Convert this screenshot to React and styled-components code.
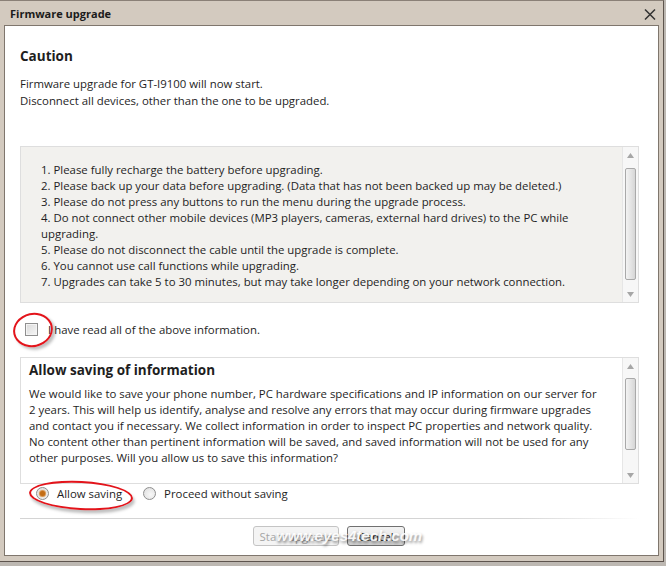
import React from "react";
import styled, { createGlobalStyle } from "styled-components";

const GlobalStyle = createGlobalStyle`
  html, body {
    margin: 0;
    padding: 0;
    background: #bdb8b2;
  }
  body {
    font-family: "Open Sans", "Noto Sans", sans-serif;
    font-size: 11.4px;
    color: #1e1e1e;
  }
`;

const Window = styled.div`
  position: relative;
  width: 664px;
  height: 562px;
  box-sizing: border-box;
  background: #d3cabf;
  border-top: 1px solid #8a8077;
  border-right: 1px solid #5e554e;
  border-bottom: 1px solid #5e554e;
  display: flex;
  flex-direction: column;
`;

const TitleBar = styled.div`
  height: 24px;
  display: flex;
  align-items: center;
  justify-content: space-between;
  padding: 0 7px 0 10px;
  font-weight: 700;
  font-size: 11px;
  color: #1b1b1b;
`;

const CloseIcon = styled.svg`
  width: 12px;
  height: 11px;
  margin-top: 2px;
`;

const Content = styled.div`
  position: relative;
  margin: 0 4px 5px 4px;
  height: 531px;
  box-sizing: border-box;
  background: #fff;
  border: 1px solid #7f766d;
  padding: 20px 0 0 15px;
  display: flex;
  flex-direction: column;
`;

const Heading = styled.div`
  font-weight: 700;
  font-size: 13.5px;
  line-height: 20px;
`;

const Intro = styled.div`
  margin-top: 9px;
  line-height: 17px;
`;

const Panel = styled.div`
  display: flex;
  width: 619px;
  height: ${(p) => p.$height}px;
  box-sizing: border-box;
  margin-top: ${(p) => p.$top}px;
  background: ${(p) => p.$bg};
  border: 1px solid #dedede;
`;

const PanelText = styled.div`
  flex: 1;
  padding: ${(p) => p.$pad};
  line-height: 16px;
  white-space: nowrap;
`;

const PanelTitle = styled.div`
  font-weight: 700;
  font-size: 13.5px;
  line-height: 18px;
  margin-bottom: 7px;
`;

const ScrollTrack = styled.div`
  width: 15px;
  display: flex;
  flex-direction: column;
  align-items: center;
  background: #f7f7f7;
  border-left: 1px solid #e6e6e6;
`;

const ArrowBox = styled.div`
  height: 16px;
  display: flex;
  align-items: center;
  justify-content: center;
`;

const Thumb = styled.div`
  width: 11px;
  height: ${(p) => p.$h}px;
  margin-top: ${(p) => p.$top}px;
  box-sizing: border-box;
  border: 1px solid #a9a9a9;
  border-radius: 2px;
  background: linear-gradient(to right, #f3f3f3, #e2e2e2 60%, #d6d6d6);
`;

const Spacer = styled.div`
  flex: 1;
`;

const CheckRow = styled.label`
  position: relative;
  display: flex;
  align-items: center;
  height: 13px;
  margin: 20px 0 0 5px;
  gap: 10px;
  line-height: 13px;
`;

const CheckBox = styled.span`
  width: 13px;
  height: 13px;
  box-sizing: border-box;
  border: 1px solid #8f8f8f;
  background: linear-gradient(135deg, #dadada, #f6f6f6);
  box-shadow: inset 0 0 0 1px #f4f4f4;
`;

const Ellipse = styled.span`
  position: absolute;
  left: ${(p) => p.$x}px;
  top: ${(p) => p.$y}px;
  width: ${(p) => p.$w}px;
  height: ${(p) => p.$h}px;
  box-sizing: border-box;
  border: 2px solid #e3141b;
  border-radius: 50%;
  transform: rotate(${(p) => p.$rot}deg);
  box-shadow: 2px 3px 3px rgba(0, 0, 0, 0.25);
  pointer-events: none;
`;

const RadioRow = styled.div`
  position: relative;
  display: flex;
  align-items: center;
  height: 13px;
  margin: 3px 0 0 16px;
`;

const RadioOption = styled.label`
  display: flex;
  align-items: center;
  gap: 8px;
  margin-right: 21px;
  line-height: 13px;
`;

const Radio = styled.span`
  width: 13px;
  height: 13px;
  box-sizing: border-box;
  border-radius: 50%;
  border: 1px solid #8e8e8e;
  background: radial-gradient(circle at 60% 60%, #f8f8f8, #dcdcdc);
  display: flex;
  align-items: center;
  justify-content: center;
  &::after {
    content: "";
    width: 5px;
    height: 5px;
    border-radius: 50%;
    background: ${(p) => (p.$checked ? "#c36d16" : "transparent")};
    box-shadow: ${(p) => (p.$checked ? "0 0 1px 1px #d58a3c" : "none")};
  }
`;

const Separator = styled.div`
  margin-top: 18px;
  width: 620px;
  height: 1px;
  background: linear-gradient(to right, #d4d4d4 0%, #d4d4d4 80%, rgba(212, 212, 212, 0));
`;

const ButtonRow = styled.div`
  position: relative;
  display: flex;
  justify-content: center;
  gap: 8px;
  margin: 7px 0 0 0;
  padding-right: 20px;
`;

const Button = styled.button`
  height: 20px;
  width: ${(p) => p.$w}px;
  padding: 0;
  box-sizing: border-box;
  font-family: inherit;
  font-size: 11.4px;
  border-radius: 3px;
  border: 1px solid ${(p) => (p.disabled ? "#c4c4c4" : "#707070")};
  color: ${(p) => (p.disabled ? "#a5a5a5" : "#1e1e1e")};
  background: ${(p) =>
    p.disabled
      ? "#f4f4f4"
      : "linear-gradient(to bottom, #f2f2f2 0%, #ebebeb 50%, #dddddd 51%, #cfcfcf 100%)"};
`;

const Watermark = styled.span`
  position: absolute;
  left: 256px;
  top: 1px;
  font-family: "Liberation Sans", Arial, sans-serif;
  font-size: 15px;
  font-weight: 700;
  font-style: italic;
  color: rgba(255, 255, 255, 0.92);
  text-shadow: 1px 2px 3px rgba(0, 0, 0, 0.45);
  pointer-events: none;
  white-space: nowrap;
`;

const cautionItems = [
  "1. Please fully recharge the battery before upgrading.",
  "2. Please back up your data before upgrading. (Data that has not been backed up may be deleted.)",
  "3. Please do not press any buttons to run the menu during the upgrade process.",
  "4. Do not connect other mobile devices (MP3 players, cameras, external hard drives) to the PC while",
  "upgrading.",
  "5. Please do not disconnect the cable until the upgrade is complete.",
  "6. You cannot use call functions while upgrading.",
  "7. Upgrades can take 5 to 30 minutes, but may take longer depending on your network connection.",
];

const privacyLines = [
  "We would like to save your phone number, PC hardware specifications and IP information on our server for",
  "2 years. This will help us identify, analyse and resolve any errors that may occur during firmware upgrades",
  "and contact you if necessary. We collect information in order to inspect PC properties and network quality.",
  "No content other than pertinent information will be saved, and saved information will not be used for any",
  "other purposes. Will you allow us to save this information?",
];

const Arrow = ({ up }) => (
  <ArrowBox>
    <svg width="7" height="5" viewBox="0 0 7 5">
      <path d={up ? "M0 5 L3.5 0 L7 5 Z" : "M0 0 L3.5 5 L7 0 Z"} fill="#a6a6a6" />
    </svg>
  </ArrowBox>
);

const Scrollbar = ({ thumbTop, thumbHeight }) => (
  <ScrollTrack>
    <Arrow up />
    <Thumb $top={thumbTop} $h={thumbHeight} />
    <Spacer />
    <Arrow />
  </ScrollTrack>
);

export default function App() {
  return (
    <>
      <GlobalStyle />
      <Window>
        <TitleBar>
          <span>Firmware upgrade</span>
          <CloseIcon viewBox="0 0 12 11">
            <path d="M1 0.5 L11 10.5 M11 0.5 L1 10.5" stroke="#333" strokeWidth="1.5" />
          </CloseIcon>
        </TitleBar>
        <Content>
          <Heading>Caution</Heading>
          <Intro>
            Firmware upgrade for GT-I9100 will now start.
            <br />
            Disconnect all devices, other than the one to be upgraded.
          </Intro>

          <Panel $height={157} $top={37} $bg="#f2f1ee">
            <PanelText $pad="15px 0 0 20px">
              {cautionItems.map((line) => (
                <div key={line}>{line}</div>
              ))}
            </PanelText>
            <Scrollbar thumbTop={5} thumbHeight={112} />
          </Panel>

          <CheckRow>
            <CheckBox />
            <span>I have read all of the above information.</span>
            <Ellipse $x={-12} $y={-10} $w={40} $h={34} $rot={-12} />
          </CheckRow>

          <Panel $height={127} $top={21} $bg="#ffffff">
            <PanelText $pad="3px 0 0 8px">
              <PanelTitle>Allow saving of information</PanelTitle>
              {privacyLines.map((line) => (
                <div key={line}>{line}</div>
              ))}
            </PanelText>
            <Scrollbar thumbTop={4} thumbHeight={72} />
          </Panel>

          <RadioRow>
            <RadioOption>
              <Radio $checked />
              <span>Allow saving</span>
            </RadioOption>
            <RadioOption>
              <Radio />
              <span>Proceed without saving</span>
            </RadioOption>
            <Ellipse $x={-7} $y={-6} $w={104} $h={29} $rot={3} />
          </RadioRow>

          <Separator />

          <ButtonRow>
            <Button $w={86} disabled>
              Start upgrade
            </Button>
            <Button $w={58}>Cancel</Button>
            <Watermark>www.eyes4tech.com</Watermark>
          </ButtonRow>
        </Content>
      </Window>
    </>
  );
}
